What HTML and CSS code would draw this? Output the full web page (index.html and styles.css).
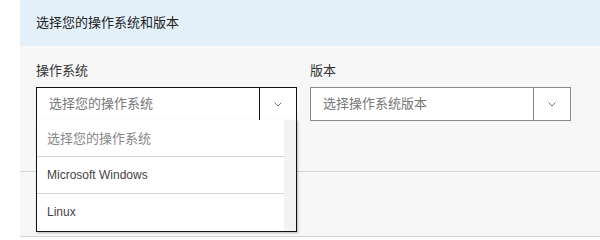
FILE: index.html
```html
<!DOCTYPE html>
<html lang="zh">
<head>
  <meta charset="UTF-8" />
  <title>选择操作系统</title>
  <link rel="stylesheet" href="styles.css">
</head>
<body>

  <div class="panel">
    <div class="panel-head">选择您的操作系统和版本</div>

    <div class="panel-body">
      <div class="fields">
        <!-- OS select (open) -->
        <div class="field">
          <div class="field-label">操作系统</div>
          <div class="select select-open">
            <span class="select-value">选择您的操作系统</span>
            <span class="select-arrow">
              <svg width="8" height="5" viewBox="0 0 8 5"><path d="M0.5 0.5 L4 4 L7.5 0.5" fill="none" stroke="#777" stroke-width="1"/></svg>
            </span>
            <ul class="dropdown">
              <li class="option option-muted">选择您的操作系统</li>
              <li class="option option-latin">Microsoft Windows</li>
              <li class="option option-latin">Linux</li>
            </ul>
          </div>
        </div>

        <!-- Version select -->
        <div class="field">
          <div class="field-label">版本</div>
          <div class="select select-disabled">
            <span class="select-value">选择操作系统版本</span>
            <span class="select-arrow">
              <svg width="8" height="5" viewBox="0 0 8 5"><path d="M0.5 0.5 L4 4 L7.5 0.5" fill="none" stroke="#777" stroke-width="1"/></svg>
            </span>
          </div>
        </div>
      </div>
    </div>

    <div class="panel-foot"></div>
  </div>

</body>
</html>
```

FILE: styles.css
```css
* {
  margin: 0;
  padding: 0;
  box-sizing: border-box;
}

body {
  background: #fff;
  color: #333;
  font-family: 'Liberation Sans', 'Noto Sans CJK SC', sans-serif;
  font-size: 13px;
}

.panel {
  margin-left: 20px;
  background: #f7f7f7;
}

.panel-head {
  height: 46px;
  line-height: 45px;
  padding-left: 16px;
  background: #e3f0fa;
  color: #222;
}

.panel-body {
  padding: 16px 16px 0;
  height: 126px;
  border-bottom: 1px solid #d4d4d4;
}

.fields {
  display: flex;
  gap: 13px;
}

.field {
  width: 261px;
}

.field-label {
  line-height: 17px;
  margin-bottom: 8px;
  color: #333;
}

.select {
  position: relative;
  display: flex;
  height: 34px;
  background: #fff;
  border: 1px solid #888;
}

.select-open {
  border-color: #111;
}

.select-value {
  flex: 1;
  line-height: 32px;
  padding-left: 12px;
  color: #777;
}

.select-arrow {
  width: 37px;
  border-left: 1px solid #888;
  display: flex;
  align-items: center;
  justify-content: center;
}

.select-open .select-arrow {
  border-left-color: #111;
}

/* Open dropdown list */
.dropdown {
  list-style: none;
  position: absolute;
  top: 32px;
  left: -1px;
  right: -1px;
  border: 1px solid #111;
  border-top: none;
  background: #fff;
  padding-right: 12px;
  box-shadow: 1px 1px 2px rgba(0,0,0,0.25);
  z-index: 10;
}

.dropdown::after {
  content: "";
  position: absolute;
  top: 0;
  right: 0;
  bottom: 0;
  width: 12px;
  background: #f3f3f3;
}

.option {
  height: 37px;
  line-height: 37px;
  padding-left: 10px;
  color: #444;
  border-bottom: 1px solid #d4d4d4;
}

.option:last-child {
  border-bottom: none;
}

.option-muted {
  color: #888;
}

.option-latin {
  font-size: 12px;
}

.panel-foot {
  height: 65px;
  border-bottom: 1px solid #d4d4d4;
}
```
